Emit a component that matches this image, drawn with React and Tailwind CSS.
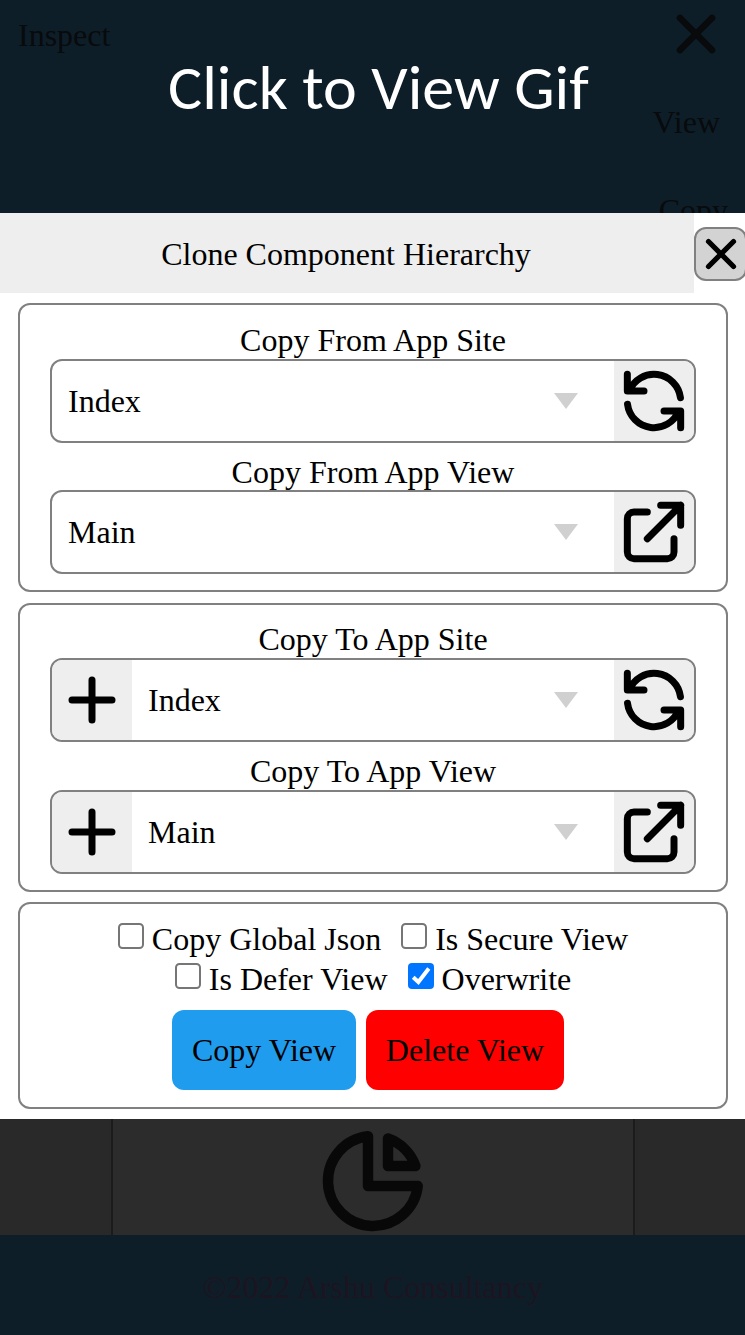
import React from "react";

const PATHS = {
  close: "M6 18L18 6M6 6l12 12",
  plus: "M12 6v6m0 0v6m0-6h6m-6 0H6",
  refresh:
    "M4 4v5h.582m15.356 2A8.001 8.001 0 004.582 9m0 0H9m11 11v-5h-.581m0 0a8.003 8.003 0 01-15.357-2m15.357 2H15",
  external:
    "M10 6H6a2 2 0 00-2 2v10a2 2 0 002 2h10a2 2 0 002-2v-4M14 4h6m0 0v6m0-6L10 14",
  pie: "M11 3.055A9.001 9.001 0 1020.945 13H11V3.055z M20.488 9H15V3.512A9.025 9.025 0 0120.488 9z",
};

function Icon({ name, className, strokeWidth = 2.1 }) {
  return (
    <svg
      viewBox="0 0 24 24"
      fill="none"
      stroke="currentColor"
      strokeWidth={strokeWidth}
      strokeLinecap="round"
      strokeLinejoin="round"
      className={`shrink-0 ${className}`}
    >
      <path d={PATHS[name]} />
    </svg>
  );
}

function Picker({ value, icon, addable }) {
  return (
    <div className="flex h-[84px] overflow-hidden rounded-xl border-2 border-[#808080]">
      {addable && (
        <button className="w-20 shrink-0 bg-[#eee]">
          <Icon name="plus" className="size-20" />
        </button>
      )}
      <div className="flex grow items-center justify-between pr-9 pl-4">
        <span>{value}</span>
        <svg viewBox="0 0 24 16" className="h-4 w-6 fill-[#d0d0d0]">
          <path d="M0 0H24L12 16Z" />
        </svg>
      </div>
      <button className="w-20 shrink-0 bg-[#eee]">
        <Icon name={icon} className="size-20" />
      </button>
    </div>
  );
}

function CopyPanel({ direction, addable }) {
  return (
    <section
      className={`h-[289px] rounded-xl border-2 border-[#808080] px-[30px] ${addable ? "pt-4" : "pt-[17px]"}`}
    >
      <h2 className="h-[37px] text-center leading-[37px]">Copy {direction} App Site</h2>
      <Picker value="Index" icon="refresh" addable={addable} />
      <h2 className={`mt-[11px] text-center leading-[37px] ${addable ? "h-[37px]" : "h-9"}`}>
        Copy {direction} App View
      </h2>
      <Picker value="Main" icon="external" addable={addable} />
    </section>
  );
}

function Check({ label, checked }) {
  return (
    <label className="flex h-10 gap-2">
      <svg viewBox="0 0 26 26" className="mt-1 size-[26px] shrink-0">
        {checked ? (
          <>
            <rect width="26" height="26" rx="4" fill="#0075ff" />
            <path d="M5.2 14.2L10.4 19L20.8 5.6" fill="none" stroke="#fff" strokeWidth="4" />
          </>
        ) : (
          <rect x="1" y="1" width="24" height="24" rx="3.5" fill="#fff" stroke="#767676" strokeWidth="2" />
        )}
      </svg>
      <span>{label}</span>
    </label>
  );
}

export default function App() {
  return (
    <div className="flex h-[1335px] w-[745px] flex-col overflow-hidden bg-white font-['Liberation_Serif',serif] text-[32px] leading-10 text-black">
      <header className="relative h-[213px] shrink-0 overflow-hidden bg-[#0d1e29] text-[#080a0c]">
        <div className="flex items-start justify-between pt-[2px] pr-[17px] pl-[18px]">
          <span className="mt-[13px]">Inspect</span>
          <Icon name="close" className="size-16" strokeWidth={2.5} />
        </div>
        <nav className="flex flex-col items-end">
          <span className="mt-9 mr-[25px]">View</span>
          <span className="mt-12 mr-[17px]">Copy</span>
        </nav>
        <div className="absolute top-[52px] left-[168px] w-[440px] origin-left scale-x-[1.05] font-['Carlito','Lato',sans-serif] text-[61px] leading-[72px] whitespace-nowrap text-white">
          Click to View Gif
        </div>
      </header>

      <main className="h-[906px] shrink-0">
        <div className="flex h-20 items-center">
          <h1 className="flex h-20 w-[694px] shrink-0 items-center justify-center bg-[#eee] pt-px pr-0.5">
            Clone Component Hierarchy
          </h1>
          <button className="mt-0.5 flex h-[54px] w-[53px] shrink-0 items-center justify-center rounded-xl border-2 border-[#808080] bg-[#d3d3d3]">
            <Icon name="close" className="size-[50px]" strokeWidth={2.5} />
          </button>
        </div>
        <div className="flex flex-col pt-2.5 pr-[17px] pl-[18px]">
          <CopyPanel direction="From" />
          <div className="h-[11px]" />
          <CopyPanel direction="To" addable />
          <section className="mt-2.5 h-[207px] rounded-xl border-2 border-[#808080] pt-[15px]">
            <div className="flex justify-center gap-5">
              <Check label="Copy Global Json" />
              <Check label="Is Secure View" />
            </div>
            <div className="flex justify-center gap-5">
              <Check label="Is Defer View" />
              <Check label="Overwrite" checked />
            </div>
            <div className="mt-[11px] flex justify-center gap-2.5 pr-2.5">
              <button className="h-20 w-[184px] rounded-xl bg-[#209cee]">Copy View</button>
              <button className="h-20 w-[198px] rounded-xl bg-[#ff0000]">Delete View</button>
            </div>
          </section>
        </div>
      </main>

      <div className="flex h-[116px] shrink-0 justify-center overflow-hidden bg-[#292929]">
        <div className="flex w-[524px] justify-center border-x-2 border-[#1b1b1b] bg-[#2c2c2c] pt-0.5">
          <Icon name="pie" className="size-[120px] text-[#080808]" />
        </div>
      </div>
      <footer className="h-[100px] shrink-0 bg-[#0e1e29] pt-8 text-center text-[#1d1421]">
        ©2022 Arshu Consultancy
      </footer>
    </div>
  );
}
